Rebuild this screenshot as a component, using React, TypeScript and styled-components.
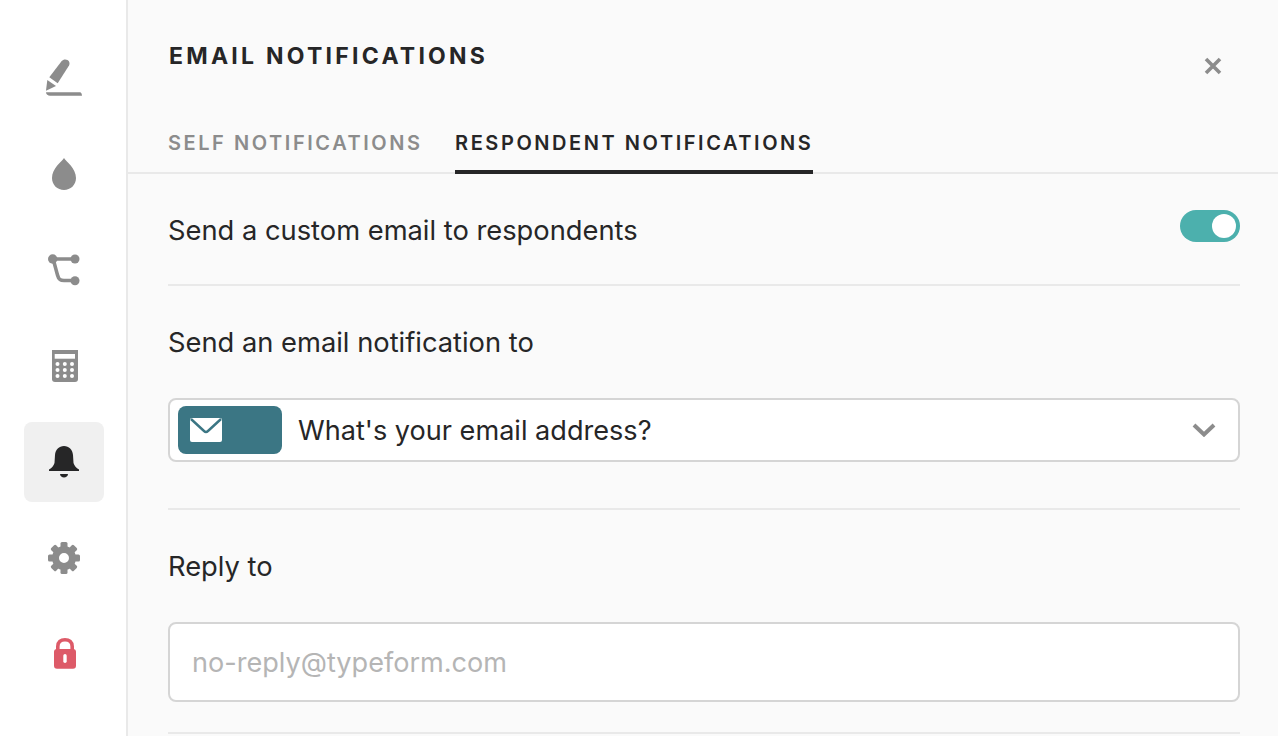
import React from "react";
import styled, { createGlobalStyle } from "styled-components";

const Global = createGlobalStyle`
  html, body { margin: 0; padding: 0; height: 736px; overflow: hidden; background: #fafafa; }
  body { font-family: Inter, "Liberation Sans", sans-serif; color: #262627; }
`;
const Page = styled.div`display: flex; width: 1278px; height: 736px; overflow: hidden;`;
const Sidebar = styled.nav`
  width: 126px; flex: none; box-sizing: content-box; background: #fff; border-right: 2px solid #e9e9e9;
  display: flex; flex-direction: column; align-items: flex-start; gap: 16px; padding: 38px 0 0 0;
`;
const NavItem = styled.div<{ $active?: boolean }>`
  width: 80px; height: 80px; margin-left: 24px; border-radius: 8px; flex: none;
  display: flex; align-items: center; justify-content: center;
  background: ${(p) => (p.$active ? "#f0f0f0" : "transparent")};
`;
const Main = styled.main`flex: 1; min-width: 0; display: flex; flex-direction: column; background: #fafafa;`;
const Header = styled.header`
  position: relative; height: 172px; flex: none; border-bottom: 2px solid #e9e9e9; padding-left: 40px;
  display: flex; flex-direction: column;
`;
const Title = styled.h1`
  margin: 42px 0 0; padding-left: 1px; font-size: 23px; line-height: 28px; font-weight: 700; letter-spacing: 3.25px; color: #262627;
`;
const CloseButton = styled.button`
  position: absolute; right: 55px; top: 56px; width: 20px; height: 20px; padding: 0; border: 0; background: none;
  display: flex; align-items: center; justify-content: center;
`;
const Tabs = styled.div`display: flex; gap: 35px; margin-top: 59px;`;
const Tab = styled.div<{ $active?: boolean }>`
  height: 41px; box-sizing: content-box; font-size: 20px; line-height: 28px; font-weight: 600; letter-spacing: 2.56px; margin-right: -2.56px;
  color: ${(p) => (p.$active ? "#262627" : "#8c8c8c")};
  border-bottom: 4px solid ${(p) => (p.$active ? "#262627" : "transparent")};
  white-space: nowrap;
`;
const Content = styled.div`padding: 0 38px 0 40px; display: flex; flex-direction: column;`;
const ToggleRow = styled.div`
  height: 110px; display: flex; align-items: center; justify-content: space-between; border-bottom: 2px solid #e9e9e9;
`;
const Label = styled.div`font-size: 27.3px; line-height: 36px; color: #262627; white-space: nowrap;`;
const RowLabel = styled(Label)`margin-top: 4px;`;
const Toggle = styled.div`
  width: 60px; height: 32px; border-radius: 16px; background: #4cb0ad; display: flex; align-items: center;
  justify-content: flex-end; padding-right: 4px; box-sizing: border-box; margin-top: -6px;
`;
const Knob = styled.div`width: 24px; height: 24px; border-radius: 50%; background: #fff;`;
const Section = styled.section<{ $bottom: number }>`
  display: flex; flex-direction: column; gap: 37px; padding-top: 39px; padding-bottom: ${(p) => p.$bottom}px;
  border-bottom: 2px solid #e9e9e9;
`;
const Select = styled.div`
  height: 64px; box-sizing: border-box; border: 2px solid #d5d5d5; border-radius: 8px; background: #fff;
  display: flex; align-items: center; padding: 0 22px 0 8px;
`;
const Badge = styled.div`
  width: 104px; height: 48px; border-radius: 8px; background: #3b7684; flex: none;
  display: flex; align-items: center; padding-left: 12px; box-sizing: border-box;
`;
const SelectText = styled(Label)`flex: 1; margin: 2px 0 0 16px; font-size: 27.1px;`;
const Input = styled.div`
  height: 80px; box-sizing: border-box; border: 2px solid #d5d5d5; border-radius: 8px; background: #fff;
  display: flex; align-items: center; padding-left: 22px; font-size: 27.1px; color: #b5b5b5; white-space: nowrap;
`;

const G = "#8c8c8c";
const R = "#dd5a68";

export default function App() {
  return (
    <Page>
      <Global />
      <Sidebar>
        <NavItem>
          <svg width="40" height="40" viewBox="0 0 40 40" fill={G}>
            <path d="M5.300 19.300 L17.700 3 C19 1.500 21.500 1 23.500 2 C25.500 3.200 26 5.500 25 7.500 L13.700 25.300 Z" />
            <path d="M3.300 22 L12 28 L2 32.700 Z" />
            <path d="M2 34.300 H36 C37 34.300 38 36 38 37.700 H6 C4 37.700 2 36.500 2 34.300 Z" />
          </svg>
        </NavItem>
        <NavItem>
          <svg width="40" height="40" viewBox="0 0 40 40" fill={G}>
            <path d="M20 4 C22 7.500 32 14 32 24 C32 31 26.500 36 20 36 C13.500 36 8 31 8 24 C8 14 18 7.500 20 4 Z" />
          </svg>
        </NavItem>
        <NavItem>
          <svg width="40" height="40" viewBox="0 0 40 40" fill="none" stroke={G} strokeWidth="3.600">
            <path d="M9 9 H31 M9 9 C11 15 12 20 13.500 25 C14.500 29 16 30.500 20 30.500 H31" />
            <g fill={G} stroke="none">
              <circle cx="8.700" cy="9" r="4.700" />
              <circle cx="31" cy="9" r="4.500" />
              <circle cx="31" cy="30.700" r="4.500" />
            </g>
          </svg>
        </NavItem>
        <NavItem>
          <svg width="40" height="40" viewBox="0 0 40 40">
            <path d="M8 4 H34 V33 A3 3 0 0 1 31 36 H11 A3 3 0 0 1 8 33 Z" fill={G} />
            <rect x="10.700" y="8" width="20.300" height="4.700" fill="#fff" />
            {[18, 24, 30].map((y) =>
              [13.500, 20.800, 28].map((x) => <circle key={`${y}-${x}`} cx={x} cy={y} r="2" fill="#fff" />)
            )}
          </svg>
        </NavItem>
        <NavItem $active>
          <svg width="40" height="40" viewBox="0 0 40 40" fill="#262627">
            <path d="M5 27.500 C8 26 9.500 24 10.500 21 L11 13 C11.500 7.500 15 4 20 4 C25 4 28.500 7.500 29 13 L29.500 21 C30.500 24 32 26 35 27.500 V29 H5 Z" />
            <path d="M16 32 H24 C24 34 22 35.500 20 35.500 C18 35.500 16 34 16 32 Z" />
          </svg>
        </NavItem>
        <NavItem>
          <svg width="40" height="40" viewBox="0 0 40 40" fill={G}>
            <circle cx="20" cy="20" r="8.500" fill="none" stroke={G} strokeWidth="7" />
            {[0, 45, 90, 135, 180, 225, 270, 315].map((a) => (
              <rect key={a} x="16.500" y="4" width="7" height="6" rx="1.500" transform={`rotate(${a} 20 20)`} />
            ))}
          </svg>
        </NavItem>
        <NavItem>
          <svg width="40" height="40" viewBox="0 0 40 40">
            <path d="M13.800 17 V12.500 C13.800 8 16.800 5.800 21 5.800 C25.200 5.800 28.200 8 28.200 12.500 V17" fill="none" stroke={R} strokeWidth="3.600" />
            <rect x="10" y="15" width="22" height="19.700" rx="3" fill={R} />
            <rect x="19.300" y="20" width="3.400" height="9" rx="1.700" fill="#fff" />
          </svg>
        </NavItem>
      </Sidebar>
      <Main>
        <Header>
          <Title>EMAIL NOTIFICATIONS</Title>
          <CloseButton aria-label="Close">
            <svg width="18" height="18" viewBox="0 0 18 18" stroke={G} strokeWidth="3.600" strokeLinecap="butt">
              <path d="M2 2 L16 16 M16 2 L2 16" />
            </svg>
          </CloseButton>
          <Tabs>
            <Tab>SELF NOTIFICATIONS</Tab>
            <Tab $active>RESPONDENT NOTIFICATIONS</Tab>
          </Tabs>
        </Header>
        <Content>
          <ToggleRow>
            <RowLabel>Send a custom email to respondents</RowLabel>
            <Toggle><Knob /></Toggle>
          </ToggleRow>
          <Section $bottom={46}>
            <Label>Send an email notification to</Label>
            <Select>
              <Badge>
                <svg width="32" height="24" viewBox="0 0 32 24">
                  <path d="M2 0 H30 A2 2 0 0 1 32 2 V22 A2 2 0 0 1 30 24 H2 A2 2 0 0 1 0 22 V2 A2 2 0 0 1 2 0 Z" fill="#fff" />
                  <path d="M1 1 L14 13 C15.200 14.100 16.800 14.100 18 13 L31 1" fill="none" stroke="#3b7684" strokeWidth="2.400" />
                </svg>
              </Badge>
              <SelectText>What's your email address?</SelectText>
              <svg width="24" height="14" viewBox="0 0 24 14" fill="none" stroke={G} strokeWidth="4">
                <path d="M2 2 L12 11.500 L22 2" />
              </svg>
            </Select>
          </Section>
          <Section $bottom={30}>
            <Label>Reply to</Label>
            <Input>no-reply@typeform.com</Input>
          </Section>
        </Content>
      </Main>
    </Page>
  );
}
